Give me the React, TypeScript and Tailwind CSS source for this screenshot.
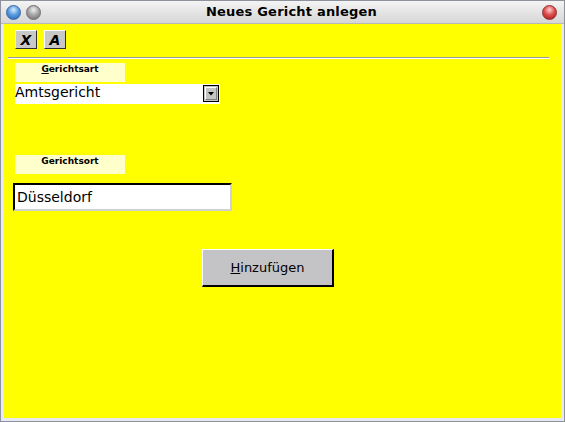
import React from "react";

const font = { fontFamily: '"DejaVu Sans", Verdana, sans-serif' };

function Orb({ from, mid, to, border }: { from: string; mid: string; to: string; border: string }) {
  return (
    <div
      className="w-[15px] h-[15px] rounded-full"
      style={{
        background: `radial-gradient(circle at 50% 30%, ${from} 0%, ${mid} 45%, ${to} 100%)`,
        border: `1px solid ${border}`,
      }}
    />
  );
}

export default function App() {
  return (
    <div className="w-[565px] h-[422px] flex flex-col border border-[#8e929c] bg-[#e6e9f2]" style={font}>
      {/* title bar */}
      <div className="relative h-[23px] flex items-center bg-gradient-to-b from-[#f4f4f4] to-[#d6d6d6] border-b border-[#b8b8b8]">
        <div className="flex items-center gap-[5px] pl-[5px]">
          <Orb from="#d8ecff" mid="#5a9de0" to="#1d5fb0" border="#3a6aa0" />
          <Orb from="#f0f0f0" mid="#a8a8a8" to="#6a6a6a" border="#6e6e6e" />
        </div>
        <div className="flex-1 text-center text-[13px] font-bold text-black tracking-[0.2px]">Neues Gericht anlegen</div>
        <div className="pr-[7px]">
          <Orb from="#ffd0d0" mid="#e05050" to="#a01010" border="#903030" />
        </div>
      </div>
      {/* content */}
      <div className="flex-1 mx-[3px] mb-[3px] bg-[#ffff00] flex flex-col items-start">
        <div className="flex gap-[7px] mt-[6px] ml-[11px]">
          {["X", "A"].map((l) => (
            <div
              key={l}
              className="w-[22px] h-[19px] flex items-center justify-center bg-[#c8c8c8] border border-t-white border-l-white border-b-[#303030] border-r-[#303030] text-[14px] font-bold italic text-black leading-none"
            >
              {l}
            </div>
          ))}
        </div>
        <div className="mt-[8px] ml-[4px] w-[541px] h-[2px] border-t border-[#9a9a9a] border-b border-b-white" />
        <div className="mt-[4px] ml-[11px] w-[110px] h-[19px] bg-[#ffffcc] text-[9px] font-bold text-black text-center pt-[1px] leading-[10px]">
          <span className="underline">G</span>erichtsart
        </div>
        <div className="mt-[2px] ml-[11px] w-[205px] h-[20px] bg-white flex items-start justify-between pr-[1px]">
          <span className="text-[14px] text-black leading-[16px] pt-[0px]">Amtsgericht</span>
          <div className="mt-[1px] w-[16px] h-[17px] bg-[#c4c4c4] border border-black flex items-center justify-center">
            <div className="w-[12px] h-[13px] border border-t-white border-l-white border-b-[#808080] border-r-[#808080] flex items-center justify-center">
              <svg width="6" height="4" viewBox="0 0 6 4"><path d="M0 0H6L3 3.5Z" fill="#000" /></svg>
            </div>
          </div>
        </div>
        <div className="mt-[51px] ml-[11px] w-[110px] h-[19px] bg-[#ffffcc] text-[9px] font-bold text-black text-center pt-[1px] leading-[10px]">
          Gerichtsort
        </div>
        <div className="mt-[9px] ml-[9px] w-[219px] h-[28px] bg-white border-2 border-t-black border-l-black border-b-[#d0d0d0] border-r-[#d0d0d0] flex items-center pl-[2px]">
          <span className="text-[14px] text-black leading-none">Düsseldorf</span>
        </div>
        <div className="mt-[38px] ml-[198px] w-[132px] h-[38px] bg-[#c4c3c6] border-t border-l border-t-white border-l-white border-b-2 border-r-2 border-b-black border-r-black flex items-center justify-center text-[13px] text-black">
          <span>
            <span className="underline">H</span>inzufügen
          </span>
        </div>
      </div>
    </div>
  );
}
